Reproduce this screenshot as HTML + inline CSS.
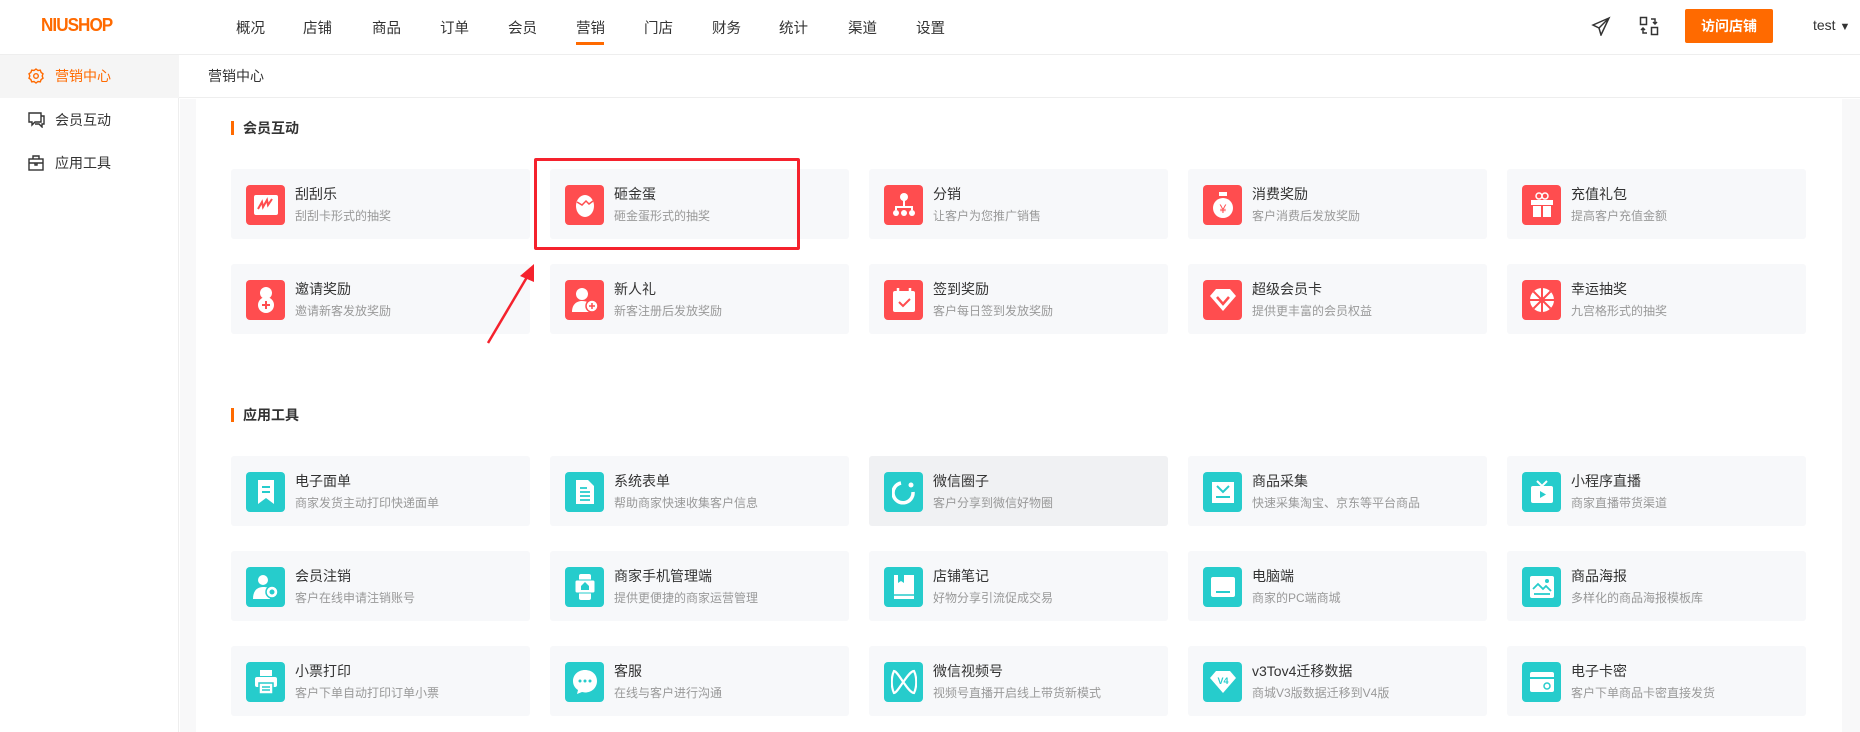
<!DOCTYPE html>
<html><head><meta charset="utf-8"><style>
*{margin:0;padding:0;box-sizing:border-box}
body{width:1860px;height:732px;overflow:hidden;background:#fff;font-family:"Liberation Sans","Noto Sans CJK SC",sans-serif;position:relative;color:#333}
.abs{position:absolute}
.hdr{left:0;top:0;width:1860px;height:55px;border-bottom:1px solid #eee;background:#fff}
.logo{left:41px;top:15px;font-size:18px;font-weight:bold;color:#ff6a00;letter-spacing:-1px;transform:scaleX(0.95);transform-origin:left}
.nav{top:17px;font-size:14.5px;color:#333}
.side{left:0;top:55px;width:179px;height:677px;border-right:1px solid #eee;background:#fff}
.sitem{left:0;width:179px;height:43px;font-size:14px;line-height:43px;padding-left:55px;color:#333}
.sitem svg{position:absolute;left:28px;top:13px}
.bc{left:179px;top:55px;width:1681px;height:43px;border-bottom:1px solid #eee;font-size:14px;line-height:43px;padding-left:29px;color:#333}
.card{width:299px;height:70px;background:#f7f8fa;border-radius:3px}
.card .ic{position:absolute;left:15px;top:16px;width:39px;height:40px;border-radius:4px;display:flex;align-items:center;justify-content:center}
.card .t{position:absolute;left:64px;top:15px;font-size:14px;color:#333}
.card .d{position:absolute;left:64px;top:38px;font-size:12px;color:#999}
.red{background:#ff4d4f}.teal{background:#26cccc}
.st{font-size:14px;font-weight:bold;color:#333;padding-left:9px;border-left:3px solid #ff6a00;line-height:14px}
</style></head><body>
<div class="abs hdr"></div>
<div class="abs logo">NIUSHOP</div>
<div class="abs nav" style="left:236px">概况</div>
<div class="abs nav" style="left:303px">店铺</div>
<div class="abs nav" style="left:372px">商品</div>
<div class="abs nav" style="left:440px">订单</div>
<div class="abs nav" style="left:508px">会员</div>
<div class="abs nav" style="left:576px">营销</div>
<div class="abs" style="left:576px;top:42px;width:28px;height:3px;background:#ff6a00"></div>
<div class="abs nav" style="left:644px">门店</div>
<div class="abs nav" style="left:712px">财务</div>
<div class="abs nav" style="left:779px">统计</div>
<div class="abs nav" style="left:848px">渠道</div>
<div class="abs nav" style="left:916px">设置</div>
<svg class="abs" style="left:1591px;top:16px" width="20" height="20" viewBox="0 0 20 20" fill="none" stroke="#333" stroke-width="1.5"><path d="M18 2L2 9l6 3 2 7z M18 2L8 12"/></svg>
<svg class="abs" style="left:1639px;top:16px" width="20" height="20" viewBox="0 0 20 20" fill="none" stroke="#333" stroke-width="1.5"><rect x="1.5" y="1.5" width="6" height="7"/><rect x="12.5" y="11.5" width="6" height="7"/><path d="M12 3h4l0 5M14 6l2 2 2-2M8 17H4v-5M2 14l2-2 2 2"/></svg>
<div class="abs" style="left:1685px;top:9px;width:88px;height:34px;background:#ff6a00;border-radius:2px;color:#fff;font-size:14px;font-weight:bold;text-align:center;line-height:34px">访问店铺</div>
<div class="abs" style="left:1813px;top:17px;font-size:14px;color:#333">test <span style="font-size:11px">▼</span></div>

<div class="abs side"></div>
<div class="abs sitem" style="top:55px;background:#f5f5f5;color:#ff6a00"><svg width="16" height="16" viewBox="0 0 16 16" fill="none" stroke="#ff6a00" stroke-width="1.4"><path d="M8 1l2 1.5 2.3-.3.8 2.2 1.9 1.4-.8 2.2.8 2.2-1.9 1.4-.8 2.2-2.3-.3L8 15l-2-1.5-2.3.3-.8-2.2L1 10.2l.8-2.2L1 5.8l1.9-1.4.8-2.2 2.3.3z"/><circle cx="8" cy="8" r="2.3"/></svg>营销中心</div>
<div class="abs sitem" style="top:99px"><svg width="17" height="16" viewBox="0 0 17 16" fill="none" stroke="#333" stroke-width="1.4"><path d="M1 1h12v9H7l-3 3v-3H1z M13 4h3v8h-2v3l-3-3H7"/></svg>会员互动</div>
<div class="abs sitem" style="top:142px"><svg width="16" height="16" viewBox="0 0 16 16" fill="none" stroke="#333" stroke-width="1.4"><rect x="1" y="4" width="14" height="11"/><path d="M5 4V1h6v3M1 8h14M7 8v2h2V8"/></svg>应用工具</div>

<div class="abs bc">营销中心</div>
<div class="abs" style="left:180px;top:99px;width:16px;height:633px;background:#f8f8f9"></div>
<div class="abs" style="left:1842px;top:99px;width:18px;height:633px;background:#f8f8f9"></div>

<div class="abs st" style="left:231px;top:121px">会员互动</div>
<div class="abs st" style="left:231px;top:408px">应用工具</div>

<!-- row1 -->
<div class="abs card" style="left:231px;top:169px"><div class="ic red"><svg width="26" height="22" viewBox="0 0 26 22"><rect x="1" y="1" width="24" height="20" rx="2" fill="#fff"/><path d="M5 15l4-7 1 5 4-7 1 5 4-6" stroke="#ff4d4f" stroke-width="2" fill="none"/></svg></div><div class="t">刮刮乐</div><div class="d">刮刮卡形式的抽奖</div></div>
<div class="abs card" style="left:550px;top:169px"><div class="ic red"><svg width="22" height="26" viewBox="0 0 22 26"><ellipse cx="11" cy="14" rx="9" ry="11" fill="#fff"/><path d="M3 10l5 3 4-4 3 3 4-3" stroke="#ff4d4f" stroke-width="1.5" fill="none"/></svg></div><div class="t">砸金蛋</div><div class="d">砸金蛋形式的抽奖</div></div>
<div class="abs card" style="left:869px;top:169px"><div class="ic red"><svg width="24" height="26" viewBox="0 0 24 26" fill="#fff"><circle cx="12" cy="5" r="4"/><rect x="11" y="8" width="2" height="8"/><path d="M4 18v-3h16v3" stroke="#fff" stroke-width="2" fill="none"/><circle cx="4" cy="21" r="3"/><circle cx="12" cy="21" r="3"/><circle cx="20" cy="21" r="3"/></svg></div><div class="t">分销</div><div class="d">让客户为您推广销售</div></div>
<div class="abs card" style="left:1188px;top:169px"><div class="ic red"><svg width="22" height="28" viewBox="0 0 22 28"><rect x="7" y="1" width="8" height="4" fill="#fff"/><ellipse cx="11" cy="17" rx="10" ry="10" fill="#fff"/><text x="11" y="22" font-size="12" text-anchor="middle" fill="#ff4d4f" font-family="Liberation Sans">¥</text></svg></div><div class="t">消费奖励</div><div class="d">客户消费后发放奖励</div></div>
<div class="abs card" style="left:1507px;top:169px"><div class="ic red"><svg width="24" height="26" viewBox="0 0 24 26" fill="#fff"><circle cx="9" cy="4" r="3" fill="none" stroke="#fff" stroke-width="1.5"/><circle cx="15" cy="4" r="3" fill="none" stroke="#fff" stroke-width="1.5"/><rect x="1" y="8" width="22" height="5"/><rect x="3" y="14" width="8" height="11"/><rect x="13" y="14" width="8" height="11"/></svg></div><div class="t">充值礼包</div><div class="d">提高客户充值金额</div></div>
<!-- row2 -->
<div class="abs card" style="left:231px;top:264px"><div class="ic red"><svg width="20" height="28" viewBox="0 0 20 28" fill="#fff"><circle cx="10" cy="7" r="6"/><circle cx="10" cy="19" r="8"/><path d="M10 15v8M6 19h8" stroke="#ff4d4f" stroke-width="2"/></svg></div><div class="t">邀请奖励</div><div class="d">邀请新客发放奖励</div></div>
<div class="abs card" style="left:550px;top:264px"><div class="ic red"><svg width="28" height="26" viewBox="0 0 28 26" fill="#fff"><circle cx="11" cy="7" r="6"/><path d="M1 25c0-8 5-11 10-11s8 2 9 4v7z"/><circle cx="21" cy="19" r="6" stroke="#ff4d4f" stroke-width="1.5"/><path d="M21 16v6M18 19h6" stroke="#ff4d4f" stroke-width="1.5"/></svg></div><div class="t">新人礼</div><div class="d">新客注册后发放奖励</div></div>
<div class="abs card" style="left:869px;top:264px"><div class="ic red"><svg width="24" height="26" viewBox="0 0 24 26"><rect x="1" y="4" width="22" height="21" rx="2" fill="#fff"/><path d="M6 1v6M18 1v6" stroke="#fff" stroke-width="2.5"/><path d="M7 15l4 4 7-7" stroke="#ff4d4f" stroke-width="2" fill="none"/></svg></div><div class="t">签到奖励</div><div class="d">客户每日签到发放奖励</div></div>
<div class="abs card" style="left:1188px;top:264px"><div class="ic red"><svg width="26" height="24" viewBox="0 0 26 24"><path d="M6 1h14l6 7-13 15L0 8z" fill="#fff"/><path d="M7 9l6 7 6-7" stroke="#ff4d4f" stroke-width="2.5" fill="none"/></svg></div><div class="t">超级会员卡</div><div class="d">提供更丰富的会员权益</div></div>
<div class="abs card" style="left:1507px;top:264px"><div class="ic red"><svg width="26" height="26" viewBox="0 0 26 26"><circle cx="13" cy="13" r="12" fill="#fff"/><g stroke="#ff4d4f" stroke-width="2"><path d="M13 1v24M1 13h24M4.5 4.5l17 17M21.5 4.5l-17 17"/></g><circle cx="13" cy="13" r="3" fill="#ff4d4f"/></svg></div><div class="t">幸运抽奖</div><div class="d">九宫格形式的抽奖</div></div>

<!-- red box & arrow -->
<div class="abs" style="left:534px;top:158px;width:266px;height:92px;border:3px solid #f5222d;border-radius:2px"></div>
<svg class="abs" style="left:480px;top:258px" width="60" height="90" viewBox="0 0 60 90"><path d="M8 85L50 14" stroke="#f5222d" stroke-width="2.5"/><path d="M54 6L40 18l14 6z" fill="#f5222d"/></svg>

<!-- row3 -->
<div class="abs card" style="left:231px;top:456px"><div class="ic teal"><svg width="18" height="26" viewBox="0 0 18 26"><path d="M1 1h16v24l-8-6-8 6z" fill="#fff"/><path d="M5 8h8M5 13h8" stroke="#26cccc" stroke-width="2"/></svg></div><div class="t">电子面单</div><div class="d">商家发货主动打印快递面单</div></div>
<div class="abs card" style="left:550px;top:456px"><div class="ic teal"><svg width="20" height="26" viewBox="0 0 20 26"><path d="M1 1h12l6 6v18H1z" fill="#fff"/><path d="M5 9h7M5 13h10M5 17h10M5 21h10" stroke="#26cccc" stroke-width="1.8"/></svg></div><div class="t">系统表单</div><div class="d">帮助商家快速收集客户信息</div></div>
<div class="abs card" style="left:869px;top:456px;background:#f0f1f3"><div class="ic teal"><svg width="24" height="26" viewBox="0 0 24 26"><path d="M9 4A10 10 0 1 0 21 13" stroke="#fff" stroke-width="3.5" fill="none"/><circle cx="19" cy="6" r="2.5" fill="#fff"/></svg></div><div class="t">微信圈子</div><div class="d">客户分享到微信好物圈</div></div>
<div class="abs card" style="left:1188px;top:456px"><div class="ic teal"><svg width="24" height="24" viewBox="0 0 24 24"><path d="M1 2h22v21H1z" fill="#fff"/><path d="M6 6l6 6 6-6M5 17h14" stroke="#26cccc" stroke-width="2" fill="none"/></svg></div><div class="t">商品采集</div><div class="d">快速采集淘宝、京东等平台商品</div></div>
<div class="abs card" style="left:1507px;top:456px"><div class="ic teal"><svg width="24" height="24" viewBox="0 0 24 24"><path d="M7 1l5 5 5-5" stroke="#fff" stroke-width="2" fill="none"/><rect x="1" y="6" width="22" height="17" rx="2" fill="#fff"/><path d="M10 11v7l6-3.5z" fill="#26cccc"/></svg></div><div class="t">小程序直播</div><div class="d">商家直播带货渠道</div></div>
<!-- row4 -->
<div class="abs card" style="left:231px;top:551px"><div class="ic teal"><svg width="28" height="26" viewBox="0 0 28 26" fill="#fff"><circle cx="11" cy="6" r="5"/><path d="M1 25c0-9 5-12 10-12s6 1 7 3v9z"/><circle cx="20" cy="18" r="6" stroke="#26cccc" stroke-width="1.5"/><circle cx="20" cy="18" r="2.5" fill="#26cccc"/></svg></div><div class="t">会员注销</div><div class="d">客户在线申请注销账号</div></div>
<div class="abs card" style="left:550px;top:551px"><div class="ic teal"><svg width="22" height="28" viewBox="0 0 22 28"><rect x="5" y="1" width="12" height="26" rx="2" fill="#fff"/><rect x="1" y="7" width="20" height="13" rx="2" fill="#fff" stroke="#26cccc" stroke-width="1"/><path d="M11 9l-4 4v4h8v-4z" fill="#26cccc"/></svg></div><div class="t">商家手机管理端</div><div class="d">提供更便捷的商家运营管理</div></div>
<div class="abs card" style="left:869px;top:551px"><div class="ic teal"><svg width="22" height="26" viewBox="0 0 22 26"><rect x="1" y="1" width="20" height="24" fill="#fff"/><path d="M5 1v8l3-2 3 2V1" fill="#26cccc"/><path d="M1 21h20" stroke="#26cccc" stroke-width="1.5"/></svg></div><div class="t">店铺笔记</div><div class="d">好物分享引流促成交易</div></div>
<div class="abs card" style="left:1188px;top:551px"><div class="ic teal"><svg width="26" height="22" viewBox="0 0 26 22"><rect x="1" y="1" width="24" height="20" rx="2" fill="#fff"/><path d="M6 16h14" stroke="#26cccc" stroke-width="2"/></svg></div><div class="t">电脑端</div><div class="d">商家的PC端商城</div></div>
<div class="abs card" style="left:1507px;top:551px"><div class="ic teal"><svg width="26" height="24" viewBox="0 0 26 24"><rect x="1" y="1" width="24" height="22" rx="2" fill="#fff"/><path d="M4 14l5-5 5 5 3-3 5 5" stroke="#26cccc" stroke-width="1.8" fill="none"/><path d="M5 19h16" stroke="#26cccc" stroke-width="1.8"/><circle cx="18" cy="6" r="2" fill="#26cccc"/></svg></div><div class="t">商品海报</div><div class="d">多样化的商品海报模板库</div></div>
<!-- row5 -->
<div class="abs card" style="left:231px;top:646px"><div class="ic teal"><svg width="24" height="26" viewBox="0 0 24 26" fill="#fff"><rect x="6" y="1" width="12" height="6"/><rect x="1" y="8" width="22" height="10" rx="2"/><rect x="5" y="14" width="14" height="11" stroke="#26cccc" stroke-width="1.5"/><path d="M8 18h8M8 21h8" stroke="#26cccc" stroke-width="1.5"/></svg></div><div class="t">小票打印</div><div class="d">客户下单自动打印订单小票</div></div>
<div class="abs card" style="left:550px;top:646px"><div class="ic teal"><svg width="26" height="26" viewBox="0 0 26 26"><path d="M13 1C6 1 1 6 1 12c0 4 2 7 5 9l-1 4 5-2c1 0 2 .5 3 .5 7 0 12-5 12-11.5S20 1 13 1z" fill="#fff"/><circle cx="8" cy="12" r="1.5" fill="#26cccc"/><circle cx="13" cy="12" r="1.5" fill="#26cccc"/><circle cx="18" cy="12" r="1.5" fill="#26cccc"/></svg></div><div class="t">客服</div><div class="d">在线与客户进行沟通</div></div>
<div class="abs card" style="left:869px;top:646px"><div class="ic teal"><svg width="26" height="26" viewBox="0 0 26 26"><path d="M3 2c-3 6-3 16 0 22 4 0 14-22 20-22 3 6 3 16 0 22C17 24 7 2 3 2z" stroke="#fff" stroke-width="2.2" fill="none"/></svg></div><div class="t">微信视频号</div><div class="d">视频号直播开启线上带货新模式</div></div>
<div class="abs card" style="left:1188px;top:646px"><div class="ic teal"><svg width="26" height="24" viewBox="0 0 26 24"><path d="M6 1h14l6 7-13 15L0 8z" fill="#fff"/><text x="13" y="14" font-size="9" font-weight="bold" text-anchor="middle" fill="#26cccc" font-family="Liberation Sans">V4</text></svg></div><div class="t">v3Tov4迁移数据</div><div class="d">商城V3版数据迁移到V4版</div></div>
<div class="abs card" style="left:1507px;top:646px"><div class="ic teal"><svg width="26" height="22" viewBox="0 0 26 22"><rect x="1" y="1" width="24" height="20" rx="2" fill="#fff"/><path d="M1 7h24" stroke="#26cccc" stroke-width="2"/><circle cx="18" cy="15" r="3" stroke="#26cccc" stroke-width="1.5" fill="none"/></svg></div><div class="t">电子卡密</div><div class="d">客户下单商品卡密直接发货</div></div>
</body></html>
